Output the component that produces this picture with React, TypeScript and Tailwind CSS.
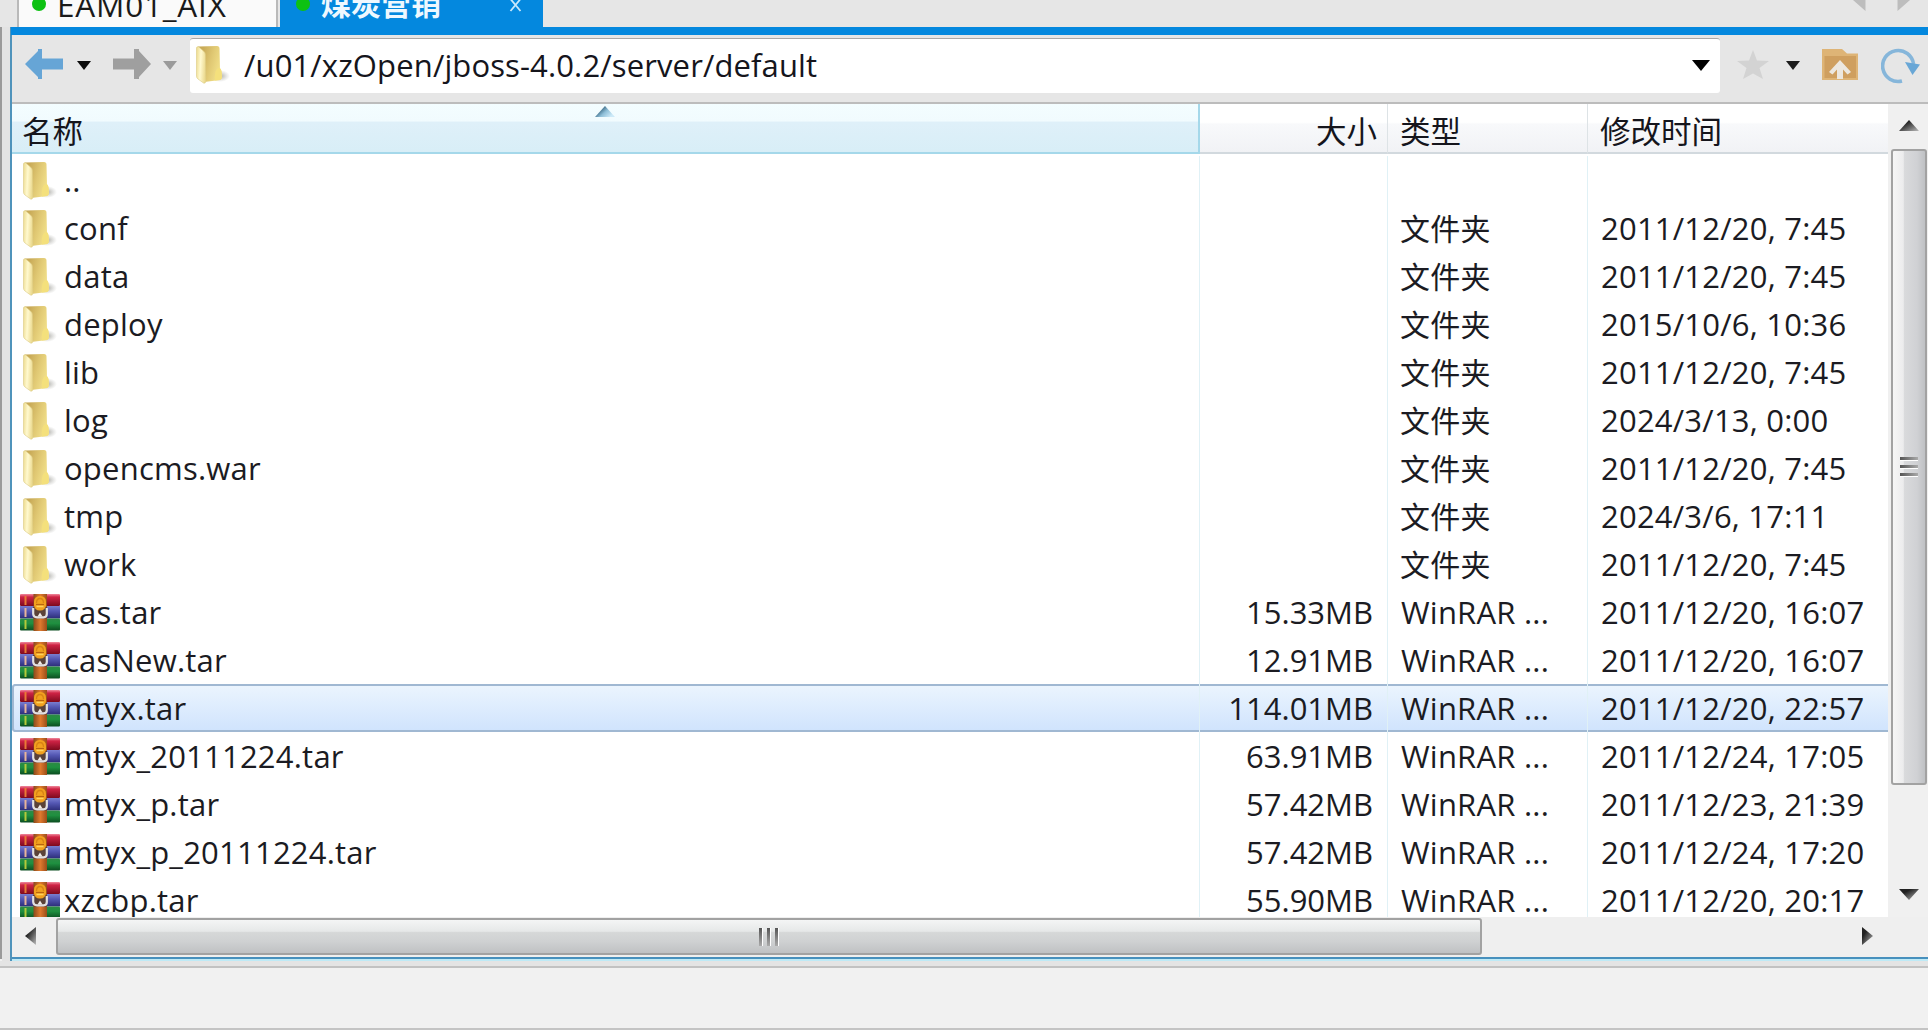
const FONT = 'font-["Open_Sans","Noto_Sans_CJK_SC",sans-serif]';

type Kind = "folder" | "archive";
type Entry = { name: string; kind: Kind; size?: string; type?: string; time?: string; selected?: boolean };

const DIR = "文件夹";
const RAR = "WinRAR ...";

const entries: Entry[] = [
  { name: "..", kind: "folder" },
  { name: "conf", kind: "folder", type: DIR, time: "2011/12/20, 7:45" },
  { name: "data", kind: "folder", type: DIR, time: "2011/12/20, 7:45" },
  { name: "deploy", kind: "folder", type: DIR, time: "2015/10/6, 10:36" },
  { name: "lib", kind: "folder", type: DIR, time: "2011/12/20, 7:45" },
  { name: "log", kind: "folder", type: DIR, time: "2024/3/13, 0:00" },
  { name: "opencms.war", kind: "folder", type: DIR, time: "2011/12/20, 7:45" },
  { name: "tmp", kind: "folder", type: DIR, time: "2024/3/6, 17:11" },
  { name: "work", kind: "folder", type: DIR, time: "2011/12/20, 7:45" },
  { name: "cas.tar", kind: "archive", size: "15.33MB", type: RAR, time: "2011/12/20, 16:07" },
  { name: "casNew.tar", kind: "archive", size: "12.91MB", type: RAR, time: "2011/12/20, 16:07" },
  { name: "mtyx.tar", kind: "archive", size: "114.01MB", type: RAR, time: "2011/12/20, 22:57", selected: true },
  { name: "mtyx_20111224.tar", kind: "archive", size: "63.91MB", type: RAR, time: "2011/12/24, 17:05" },
  { name: "mtyx_p.tar", kind: "archive", size: "57.42MB", type: RAR, time: "2011/12/23, 21:39" },
  { name: "mtyx_p_20111224.tar", kind: "archive", size: "57.42MB", type: RAR, time: "2011/12/24, 17:20" },
  { name: "xzcbp.tar", kind: "archive", size: "55.90MB", type: RAR, time: "2011/12/20, 20:17" },
];

function IconDefs() {
  return (
    <svg width="0" height="0" className="absolute">
      <defs>
        <linearGradient id="flap" x1="0" y1="0" x2="1" y2="0.2">
          <stop offset="0" stopColor="#ecd98a" />
          <stop offset="0.5" stopColor="#fff9cf" />
          <stop offset="1" stopColor="#eddc93" />
        </linearGradient>
        <linearGradient id="back" x1="0" y1="0" x2="1" y2="0.4">
          <stop offset="0.2" stopColor="#c9ab58" />
          <stop offset="0.6" stopColor="#e0c873" />
          <stop offset="1" stopColor="#f2e08a" />
        </linearGradient>
        <radialGradient id="shade">
          <stop offset="0" stopColor="#8e8e88" stopOpacity="0.75" />
          <stop offset="1" stopColor="#b0b0aa" stopOpacity="0" />
        </radialGradient>
        <linearGradient id="red" x1="0" y1="0" x2="0" y2="1">
          <stop offset="0" stopColor="#f08a9c" />
          <stop offset="0.25" stopColor="#cf2345" />
          <stop offset="1" stopColor="#7d0a1e" />
        </linearGradient>
        <linearGradient id="indigo" x1="0" y1="0" x2="0" y2="1">
          <stop offset="0" stopColor="#7a7fd0" />
          <stop offset="0.4" stopColor="#5558b4" />
          <stop offset="1" stopColor="#2c2d78" />
        </linearGradient>
        <linearGradient id="green" x1="0" y1="0" x2="0" y2="1">
          <stop offset="0" stopColor="#2d8a45" />
          <stop offset="0.4" stopColor="#1f9040" />
          <stop offset="1" stopColor="#0b4d20" />
        </linearGradient>
        <linearGradient id="strap" x1="0" y1="0" x2="1" y2="0">
          <stop offset="0" stopColor="#8a4a1c" />
          <stop offset="0.5" stopColor="#e07a2e" />
          <stop offset="1" stopColor="#9a4d1a" />
        </linearGradient>
        <linearGradient id="up" x1="0" y1="0" x2="1" y2="1">
          <stop offset="0.3" stopColor="#222" />
          <stop offset="1" stopColor="#bbb" />
        </linearGradient>
        <linearGradient id="sort" x1="0" y1="0" x2="1" y2="0.6">
          <stop offset="0.3" stopColor="#34627d" />
          <stop offset="0.62" stopColor="#8fbfd8" />
          <stop offset="1" stopColor="#cdeaf8" />
        </linearGradient>
      </defs>
    </svg>
  );
}

function FolderIcon() {
  return (
    <svg width="36" height="40" viewBox="0 0 36 40" className="shrink-0">
      <ellipse cx="25" cy="31" rx="10" ry="6" fill="url(#shade)" />
      <path d="M3 1.500 L22 1 Q24.500 1 24.500 3.500 L25 24 Q27.500 26 27 33 L25.500 35 L9 37 Z" fill="url(#back)" />
      <path d="M20 35.500 Q19 27 22.500 23.500 Q26 22 26.500 26 L26.500 33.500 L25 35 Z" fill="#f4e07c" />
      <path d="M1.500 3 Q1.500 1.200 3.500 1.800 L8.500 6 Q10.500 7.500 10.500 10 L10.800 36.500 Q10.500 38.800 8.500 38 L3 34 Q1.500 33 1.500 31 Z" fill="url(#flap)" stroke="#dccb83" strokeWidth="0.6" />
    </svg>
  );
}

function ArchiveIcon() {
  return (
    <svg width="40" height="37" viewBox="0 0 40 37" className="shrink-0">
      <rect x="0" y="0" width="40" height="12" rx="1" fill="url(#red)" />
      <rect x="0" y="12" width="40" height="12.500" fill="url(#indigo)" />
      <rect x="0" y="24.500" width="40" height="12" rx="1" fill="url(#green)" />
      <rect x="4.500" y="2" width="2" height="9" fill="#e87a35" />
      <rect x="4.500" y="14" width="2" height="9" fill="#e8b49a" />
      <rect x="4.500" y="26" width="2" height="9" fill="#b4c83a" />
      <rect x="13.500" y="0" width="13.500" height="37" fill="url(#strap)" />
      <path d="M13 13 H27 V24.500 H13 Z" fill="#5a4238" />
      <path d="M13.200 14 V20 Q13.500 23.300 17 23.300 H23.500 Q26.800 23.300 26.800 20 V14" fill="none" stroke="#e2e0e2" strokeWidth="2.200" />
      <path d="M17.500 22.500 L20 18.500 L22.500 22.500 Z" fill="#efece8" />
      <rect x="14" y="2" width="12" height="14.500" rx="5.500" fill="#f2a11f" />
      <path d="M16.500 9 Q16.500 4.500 20 4.500 T23.500 9" fill="none" stroke="#d98515" strokeWidth="1.300" />
      <path d="M16 10.500 H24" stroke="#b9650f" strokeWidth="1.200" />
      <path d="M16.500 12.500 H23.500" stroke="#ffd35c" strokeWidth="1.500" />
    </svg>
  );
}

function Caret({ className }: { className: string }) {
  return (
    <svg width="14" height="9" viewBox="0 0 14 9" className={className}>
      <polygon points="0,0 14,0 7,9" fill="currentColor" />
    </svg>
  );
}

function TabBar() {
  return (
    <div className="flex h-[27px] w-full overflow-hidden bg-[#e6e6e6] pl-[17px]">
      <div className="flex h-full w-[261px] items-end border-x-2 border-[#b9b9b9] bg-[#fafafa]">
        <i className="mb-[16px] ml-[13px] size-[14px] shrink-0 rounded-full bg-[#0dc112]" />
        <span className="mb-[1px] ml-[11px] whitespace-pre text-[31.500px] leading-[42px] tracking-[0.8px] text-[#1a1a1a]">EAM01_AIX</span>
      </div>
      <div className="ml-[2px] flex h-full w-[263px] items-end bg-[#0488de]">
        <i className="mb-[16px] ml-[16px] size-[14px] shrink-0 rounded-full bg-[#0dc112]" />
        <span className="mb-[2px] ml-[11px] w-[122px] whitespace-nowrap text-[30px] font-bold leading-[42px] text-[#eef8ff]">煤炭营销</span>
        <svg width="13" height="14" viewBox="0 0 13 14" className="mb-[15px] ml-[66px] text-[#c9e8fb]">
          <path d="M1.500 1 L11.500 13 M11.500 1 L1.500 13" stroke="currentColor" strokeWidth="1.800" />
        </svg>
      </div>
      <svg width="60" height="12" viewBox="0 0 60 12" className="ml-auto mr-[18px] text-[#bdbdbd]">
        <path d="M3 0 H15.500 V11 Z M47.500 0 H60 L47.500 11 Z" fill="currentColor" />
      </svg>
    </div>
  );
}

function Toolbar() {
  return (
    <div className="flex h-[69px] w-full items-start border-b-2 border-[#bcbcbc] bg-[#e6e6e6] pl-[13px]">
      <svg width="38" height="32" viewBox="0 0 38 32" className="mt-[13px] text-[#66a5d6]">
        <path d="M0 16 L13 3 V1 H17 V10.500 H38 V21.500 H17 V31 H13 V29 Z" fill="currentColor" />
      </svg>
      <Caret className="ml-[14px] mt-[26px] text-[#0c0c0c]" />
      <svg width="38" height="32" viewBox="0 0 38 32" className="ml-[22px] mt-[13px] text-[#9f9f9f]">
        <path d="M38 16 L26 3 V1 H21 V10.500 H0 V21.500 H21 V31 H26 V29 Z" fill="currentColor" />
      </svg>
      <Caret className="ml-[12px] mt-[26px] text-[#9b9b9b]" />
      <div className="ml-[13px] mt-[3px] flex h-[55px] w-[1530px] items-start rounded-[3px] border-t border-[#a8a8a8] bg-white">
        <div className="ml-[5px] mt-[6px]"><FolderIcon /></div>
        <span className="ml-[13px] mt-[5px] whitespace-nowrap text-[31px] leading-[42px] tracking-[0.130px] text-[#15151c]">/u01/xzOpen/jboss-4.0.2/server/default</span>
        <svg width="18" height="11" viewBox="0 0 18 11" className="ml-auto mr-[10px] mt-[21px] text-black">
          <path d="M0 0 H18 L9 11 Z" fill="currentColor" />
        </svg>
      </div>
      <svg width="32" height="30" viewBox="0 0 32 30" className="ml-[17px] mt-[15px] text-[#d3d3d3]">
        <path d="M16 0 L20 10.500 L32 11 L22.500 18 L26 29 L16 23.500 L6 29 L9.500 18 L0 11 L12 10.500 Z" fill="currentColor" />
      </svg>
      <Caret className="ml-[17px] mt-[26px] text-[#1c1c1c]" />
      <svg width="36" height="31" viewBox="0 0 36 31" className="ml-[22px] mt-[14px]">
        <path d="M0 0 H20 L25 4.500 H36 V31 H0 Z" fill="#deb476" />
        <path d="M2.500 7 H34 V29 H2.500 Z" fill="#cf9f5f" />
        <path d="M18 11 L29 23 L25.500 25.500 L21 20.500 V30 H15 V20.500 L10.500 25.500 L7 23 Z" fill="#ece7df" />
      </svg>
      <svg width="40" height="36" viewBox="0 0 40 36" className="ml-[23px] mt-[13px]">
        <path d="M21 33 A15.500 15.500 0 1 1 32.500 16" fill="none" stroke="#86b6da" strokeWidth="3.600" />
        <path d="M24 14 L39 16.500 L31.500 27 Z" fill="#69a7d6" />
      </svg>
    </div>
  );
}

const COLS = "grid grid-cols-[1188px_188px_200px_300px]";

function HeaderRow() {
  return (
    <div className={`${COLS} h-[50px] shrink-0 grid-rows-[50px] text-[30.500px] leading-[54px] text-[#15151c]`}>
      <div className="relative border-b-2 border-r-2 border-[#a5d8ea] bg-[linear-gradient(180deg,#f3fdff_0%,#f1fbfe_36%,#dff0f9_37%,#d8eef7_100%)] pl-[10px]">
        名称
        <svg width="20" height="11" viewBox="0 0 20 11" className="absolute left-[583px] top-[2px]">
          <path d="M0 11 L10 0 L20 11 Z" fill="url(#sort)" />
        </svg>
      </div>
      {["大小", "类型", "修改时间"].map((label, i) => (
        <div
          key={label}
          className={`border-b-2 border-b-[#d2d9de] bg-[linear-gradient(180deg,#ffffff_0%,#ffffff_38%,#f8f9fb_42%,#f1f2f5_100%)] ${
            i === 0 ? "pr-[10px] text-right" : "pl-[12px]"
          } ${i < 2 ? "border-r border-r-[#dde3e6]" : ""}`}
        >
          {label}
        </div>
      ))}
    </div>
  );
}

function Row({ entry }: { entry: Entry }) {
  return (
    <div
      className={`${COLS} h-[48px] shrink-0 grid-rows-[48px] text-[31px] leading-[49px] tracking-[0.220px] text-[#1b1b22] ${
        entry.selected
          ? "rounded-l-[4px] bg-[linear-gradient(180deg,#ecf5fe,#cfe3fd)] shadow-[inset_0_2px_0_#a0b8d2,inset_0_-2px_0_#a0b8d2,inset_2px_0_0_#a0b8d2]"
          : ""
      }`}
    >
      <div className="flex border-r border-[#e0f1f6]">
        <div className={entry.kind === "folder" ? "ml-[10px] mt-[5px] w-[42px]" : "ml-[8px] mt-[6px] w-[44px]"}>
          {entry.kind === "folder" ? <FolderIcon /> : <ArchiveIcon />}
        </div>
        <span className="whitespace-nowrap">{entry.name}</span>
      </div>
      <div className="whitespace-nowrap border-r border-[#e0f1f6] pr-[14px] text-right tracking-normal">{entry.size}</div>
      <div className={`whitespace-nowrap border-r border-[#e0f1f6] ${entry.kind === "folder" ? "pl-[12px] text-[30px]" : "pl-[13px]"}`}>
        {entry.type}
      </div>
      <div className="whitespace-nowrap pl-[13px]">{entry.time}</div>
    </div>
  );
}

function VerticalScroll() {
  return (
    <div className="flex h-[813px] w-[40px] flex-col bg-[#f0f0f0] pl-[3px]">
      <svg width="20" height="11" viewBox="0 0 20 11" className="ml-[8px] mt-[16px]">
        <path d="M0 11 L10 0 L20 11 Z" fill="url(#up)" />
      </svg>
      <div className="mt-[18px] flex h-[636px] w-[36px] flex-col items-center justify-center gap-[4px] rounded-[3px] border-2 border-[#a2a2a2] bg-[linear-gradient(90deg,#f6f6f6_0%,#ececed_32%,#d9dadc_36%,#d0d1d4_75%,#bfc1c4_100%)]">
        {[0, 1, 2].map((n) => (
          <i key={n} className="h-[4px] w-[18px] border-b border-white bg-[linear-gradient(90deg,#555,#aaa)]" />
        ))}
      </div>
      <svg width="20" height="11" viewBox="0 0 20 11" className="ml-[8px] mt-[104px]">
        <path d="M0 0 L10 11 L20 0 Z" fill="url(#up)" />
      </svg>
    </div>
  );
}

function HorizontalScroll() {
  return (
    <div className="flex h-[40px] w-full items-start bg-[#efefef] pt-[1px]">
      <svg width="11" height="18" viewBox="0 0 11 18" className="ml-[13px] mt-[9px]">
        <path d="M11 0 L0 9 L11 18 Z" fill="url(#up)" />
      </svg>
      <div className="ml-[20px] flex h-[37px] w-[1426px] items-center justify-center gap-[4px] rounded-[3px] border-2 border-[#a2a2a2] bg-[linear-gradient(180deg,#f4f5f5_0%,#e6e8e8_34%,#d6d8d8_38%,#cfd1d2_65%,#bfc1c3_100%)]">
        {[0, 1, 2].map((n) => (
          <i key={n} className="h-[18px] w-[4px] border-r border-white bg-[linear-gradient(180deg,#555,#aaa)]" />
        ))}
      </div>
      <svg width="11" height="18" viewBox="0 0 11 18" className="ml-[380px] mt-[9px]">
        <path d="M0 0 L11 9 L0 18 Z" fill="url(#up)" />
      </svg>
    </div>
  );
}

export default function App() {
  return (
    <div className={`h-[1030px] w-[1928px] overflow-hidden bg-[#f1f1f1] ${FONT}`}>
      <IconDefs />
      <TabBar />
      <div className="flex h-[934px]">
        <div className="h-[932px] w-[2px] bg-[#9a9a9a]" />
        <div className="w-[8px] bg-[#e3e3e3]" />
        <div className="flex w-[1918px] flex-col border-l-2 border-[#4f93bb] bg-white">
          <div className="-ml-[1px] h-[8px] shrink-0 bg-[#0488de]" />
          <Toolbar />
          <div className="flex h-[813px]">
            <div className="flex w-[1876px] flex-col overflow-hidden">
              <HeaderRow />
              <div className="flex flex-col pt-[2px]">
                {entries.map((entry) => (
                  <Row key={entry.name} entry={entry} />
                ))}
              </div>
            </div>
            <VerticalScroll />
          </div>
          <HorizontalScroll />
          <div className="h-[4px] border-t-2 border-[#4790bd] bg-[#bfeaf6]" />
        </div>
      </div>
      <div className="h-[5px] bg-[#e4e4e4]" />
      <div className="h-[62px] border-t-2 border-[#c2c2c2]" />
      <div className="h-[2px] bg-[#c4c4c4]" />
    </div>
  );
}
